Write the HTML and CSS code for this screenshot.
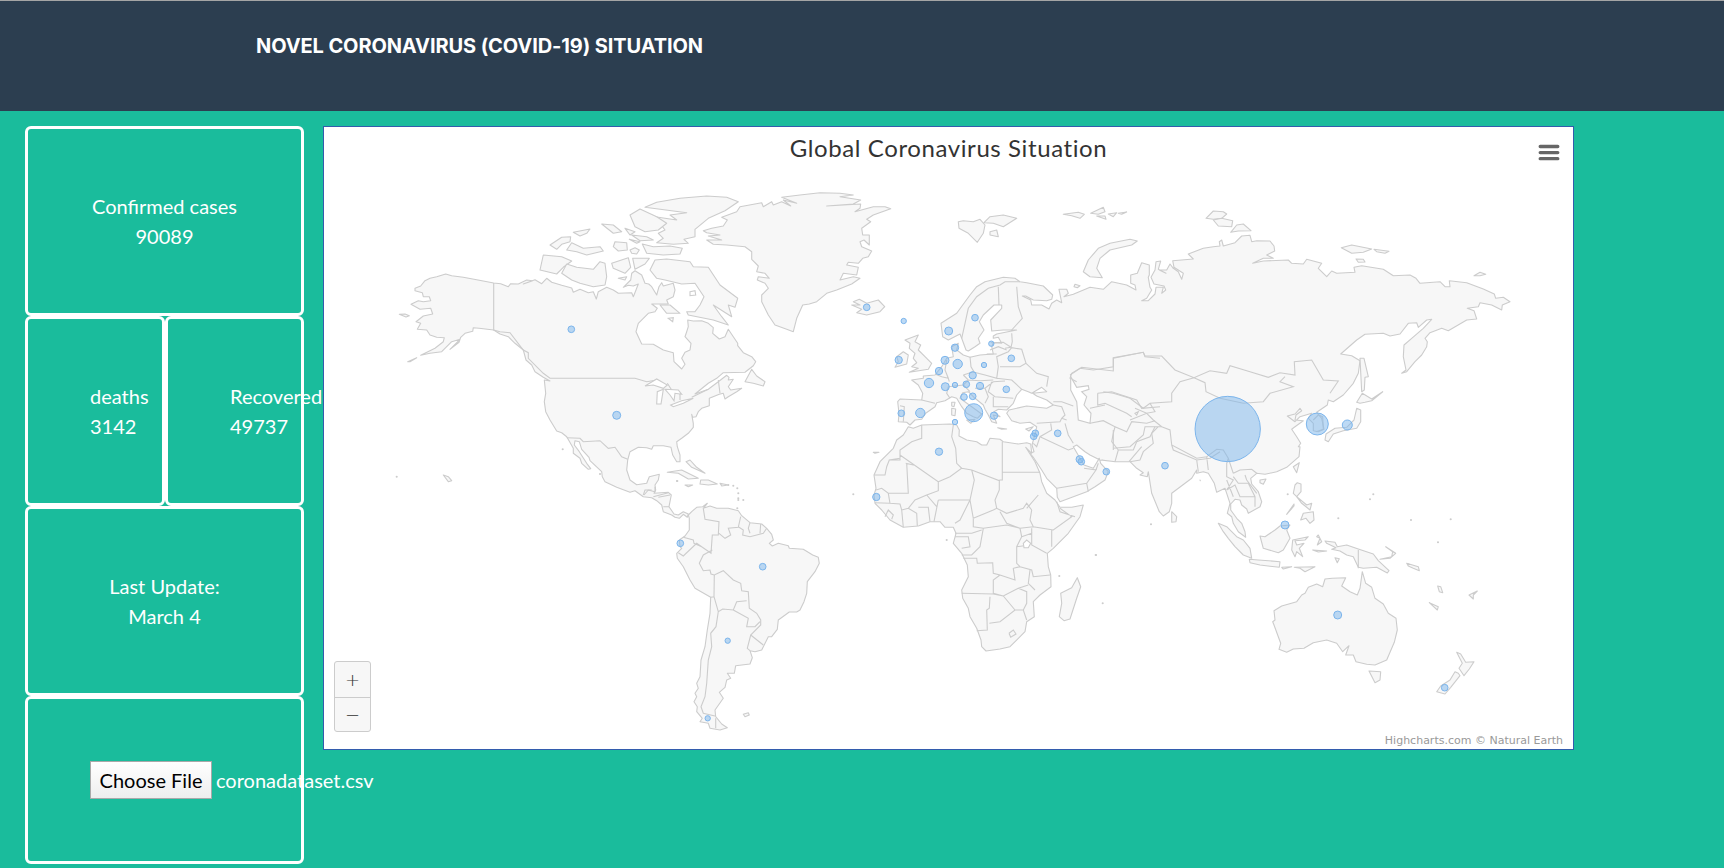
FILE: index.html
```html
<!DOCTYPE html>
<html lang="en">
<head>
<meta charset="utf-8">
<title>Novel Coronavirus (COVID-19) Situation</title>
<link rel="stylesheet" href="styles.css">
</head>
<body>
<header class="topbar"><h1 class="brand">NOVEL CORONAVIRUS (COVID-19) SITUATION</h1></header>
<main class="dashboard">
  <aside class="stats">
    <section class="card centered"><span>Confirmed cases</span><span>90089</span></section>
    <div class="pair">
      <section class="card"><span>deaths</span><span>3142</span></section>
      <section class="card"><span>Recovered</span><span>49737</span></section>
    </div>
    <section class="card centered"><span>Last Update:</span><span>March 4</span></section>
    <section class="card picker"><button class="choose">Choose File</button><span>coronadataset.csv</span></section>
  </aside>
  <section class="chart">
    <svg class="map" id="map" viewBox="324 127 1249 622"></svg>
    <h2 class="chart-title">Global Coronavirus Situation</h2>
    <svg class="menu" viewBox="0 0 22 17"><path d="M2.2 2.5H19.8M2.2 8.6H19.8M2.2 14.7H19.8"/></svg>
    <div class="zoomer"><button>+</button><button>−</button></div>
    <div class="credits">Highcharts.com © Natural Earth</div>
  </section>
</main>
<script src="map.js"></script>
</body>
</html>
```

FILE: styles.css
```css
* { box-sizing: border-box; }
body { margin: 0; height: 868px; overflow: hidden; background: #1abc9c; color: #fff; font: 20px/30px Lato, sans-serif; }
.topbar { height: 111px; background: #2c3e50; border-top: 1px solid #a5a5a5; padding: 30px 0 0 256px; }
.brand { margin: 0; font: 700 20px/30px Inter, sans-serif; letter-spacing: -0.1px; white-space: nowrap; }
.dashboard { display: flex; align-items: flex-start; gap: 19px; padding: 15px 0 0 25px; }
.stats { width: 279px; flex: none; }
.card { border: 3px solid #fff; border-radius: 6px; padding: 62px; height: 190px; display: flex; flex-direction: column; white-space: nowrap; }
.centered { align-items: center; }
.pair { display: grid; grid-template-columns: 140px 139px; height: 189.5px; }
.picker { flex-direction: row; align-items: center; gap: 4px; height: 168px; }
.choose { flex: none; width: 122px; height: 38px; padding: 0; border: 1px solid #a9a9a9; background: linear-gradient(#fff, #eee); font: 20px/30px Lato, sans-serif; color: #000; }
.chart { position: relative; z-index: 1; width: 1251px; height: 624px; background: #fff; border: 1px solid #335cad; }
.map { display: block; width: 1249px; height: 622px; }
.land { fill: #f7f7f7; stroke: #ccc; stroke-width: 1.1; stroke-linejoin: round; }
.water { fill: #fff; stroke: #ccc; stroke-width: 1.1; }
.border { fill: none; stroke: #ccc; stroke-width: 1.1; }
.bubble { fill: rgba(124, 181, 236, .5); stroke: #7cb5ec; stroke-width: 1; }
.chart-title { position: absolute; left: 0; right: 0; top: 5px; margin: 0; text-align: center; font: 400 24px/32px Lato, sans-serif; letter-spacing: .6px; color: #333; }
.menu { position: absolute; left: 1214px; top: 17px; width: 22px; height: 17px; fill: none; stroke: #666; stroke-width: 3.3; stroke-linecap: round; }
.zoomer { position: absolute; left: 10px; top: 534px; width: 37px; height: 71px; border: 1px solid #ccc; border-radius: 3px; background: #f7f7f7; display: grid; grid-template-rows: 35px 34px; }
.zoomer button { border: 0; padding: 0; background: none; color: #333; font: 18px/30px "DejaVu Sans", sans-serif; font-weight: 200; }
.zoomer button + button { border-top: 1px solid #ccc; }
.credits { position: absolute; right: 10px; bottom: 1px; font: 11px/14px "DejaVu Sans", sans-serif; color: #999; white-space: nowrap; }
```

FILE: map.js
```js
// Outlines are stored per map sheet in thirds of a pixel; "@x" switches sheet inside a path.
const sheets = { n: [380, 180], s: [520, 400], g: [640, 180], e: [860, 250], f: [860, 420], a: [1050, 190], i: [1080, 380], o: [1200, 480] };

const land = `
@n 105,325 122,318 135,302 150,295 170,290 197,282 215,287 250,292 298,301 341,309 362,311 385,320 392,311 415,312 440,300 458,302 430,312 465,299 485,311 500,295 515,307 545,316 575,324 580,337 600,328 625,338 640,335 649,357 655,335 680,322 700,330 715,340 755,338 760,350 768,330 775,312 760,318 745,316 730,322 752,300 755,280 765,272 785,285 795,310 806,312 815,320 830,345 837,320 845,308 850,318 880,310 885,330 880,350 860,360 865,372 840,372 815,372 832,385 825,395 805,400 790,415 775,430 768,455 775,470 785,492 820,493 850,510 880,518 882,545 905,567 915,553 905,535 915,517 930,510 933,490 915,470 920,455 925,440 923,420 940,423 965,422 985,430 1000,443 998,460 1018,477 1035,470 1045,448 1060,470 1073,490 1073,497 1090,518 1115,530 1127,545 1120,557 1095,577 1030,578 1010,595 985,610 945,642 985,628 1015,605 1040,586 1047,592 1045,600 1060,598 1045,620 1052,630 1085,625 1070,635 1045,650 1035,657 1030,640 1018,643 988,655 988,677 965,685 955,695 948,710 938,712 935,703 940,730 940,742 925,760 905,775 890,785 892,800 900,825 900,845 890,845 878,825 873,802 850,797 820,797 815,808 800,803 775,802 750,815 743,840 740,870 750,900 770,914 800,910 808,890 838,883 835,900 825,915 827,930 822,940 865,937 @s 454,285 447,320 462,342 475,345 490,335 505,342 502,352 490,343 478,355 465,352 455,345 430,335 425,315 410,302 395,293 370,290 345,272 330,277 290,262 255,245 247,230 245,215 210,182 207,172 185,148 178,125 165,122 163,135 178,155 200,190 212,206 205,208 185,190 180,175 160,160 160,145 142,113 @n 560,770 545,758 530,753 510,720 497,695 493,665 497,640 493,600 510,603 490,592 465,575 455,555 438,540 430,510 405,490 385,470 360,462 341,450 297,445 280,443 278,454 255,460 242,472 237,487 210,508 240,478 215,485 185,515 150,520 122,526 165,505 190,485 193,473 170,472 150,465 140,450 112,448 122,430 108,425 130,408 158,402 152,385 120,388 93,373 115,362 130,365 152,362 148,350 130,350 127,338 105,332
@s 505,345 515,335 530,322 548,320 562,310 550,325 570,318 590,325 625,325 655,332 665,347 690,368 725,372 740,385 755,403 760,420 748,430 757,438 775,430 805,437 808,445 850,448 878,465 895,472 898,490 885,515 862,545 860,580 852,605 840,630 830,636 808,636 775,660 772,688 755,710 745,710 725,750 705,755 690,752 697,773 690,792 647,797 643,820 622,820 632,835 620,840 615,862 598,877 610,895 585,930 587,950 605,972 622,983 600,990 570,985 565,970 540,965 547,955 530,935 532,920 522,905 530,890 525,880 535,865 530,850 540,830 543,780 555,740 562,690 570,640 572,592 525,565 510,540 490,500 472,475 470,460 485,445 480,440 478,420 495,408 508,390 508,355
@g 190,152 215,145 250,138 262,120 245,112 290,95 300,80 365,68 370,80 395,65 400,75 425,65 452,78 430,60 470,70 425,52 480,45 540,38 600,40 640,45 600,50 662,60 640,72 560,78 662,72 660,85 645,95 700,80 735,80 752,86 700,105 680,118 692,125 665,145 668,165 688,165 688,195 672,180 660,185 665,200 695,213 685,230 668,235 655,250 625,247 620,255 655,262 650,285 610,280 600,300 640,290 660,295 635,312 590,330 560,340 530,365 508,372 488,375 470,415 460,455 440,448 405,435 385,405 365,365 365,345 385,325 375,310 352,300 355,290 388,295 375,280 350,275 355,258 335,238 335,215 315,200 260,195 220,193 200,180 245,180 205,168 240,165 200,158
@e 480,95 500,98 550,108 578,135 575,148 560,152 520,150 497,138 487,138 512,150 515,165 545,165 567,177 575,160 590,150 605,158 597,118 620,118 625,130 612,140 640,133 690,112 730,118 755,95 800,105 828,120 825,105 812,100 812,75 832,70 845,38 868,45 868,75 @a 295,262 300,292 305,300 290,325 275,332 295,332 315,312 318,292 340,292 335,310 347,300 342,288 312,282 303,262 315,240 318,215 332,213 325,238 348,250 328,240 350,240 360,222 370,235 385,245 395,268 400,250 372,232 368,212 430,207 415,192 460,175 490,170 510,168 508,155 515,150 520,168 555,158 575,138 600,136 605,155 620,152 660,153 672,168 674,183 650,195 670,205 640,205 608,220 640,213 715,210 725,220 760,222 770,208 815,220 805,235 830,260 845,243 860,250 915,247 912,232 935,227 1000,238 1030,257 1080,255 1098,265 1110,280 1170,275 1185,290 1200,290 1198,272 1250,278 1300,297 1333,312 1337,325 1360,322 1380,335 1357,345 1355,360 1325,345 1290,338 1285,350 1252,355 1272,362 1280,387 1250,390 1195,422 1175,415 1140,428 1125,445 1132,455 1130,470 1115,495 1095,515 1070,545 1055,550 1068,540 1060,500 1062,465 1085,445 1120,415 1145,388 1130,390 1105,412 1100,398 1075,400 1050,432 1020,438 1000,430 945,433 920,450 872,492 905,497 930,512 925,550 910,580 880,615 850,635 835,630 832,645 800,667 815,685 822,718 805,725 790,722 790,700 775,685 785,670 750,680 735,695 712,678 735,672 750,655 755,662 738,675 735,690 760,692 733,712 725,718 740,740 752,760 745,770 @i 660,200 657,230 640,245 620,262 590,275 555,283 530,280 512,295 515,312 535,335 545,365 540,380 505,400 500,387 485,375 480,360 465,358 452,372 452,390 470,415 485,430 495,455 497,472 475,455 460,430 455,410 442,400 450,370 440,340 435,325 410,337 403,310 385,280 370,275 350,280 350,270 335,295 275,340 275,370 268,395 250,408 238,395 215,340 205,275 202,290 180,285 190,278 170,265 150,245 105,245 65,240 @e 767,635 720,630 690,615 675,605 650,585 640,590 660,625 672,645 700,655 718,625 722,640 745,665 735,690 705,710 @f 680,215 600,245 592,232 590,205 560,175 545,150 520,112 510,100 522,95 516,75 527,35 530,20 @e 510,517 480,520 455,512 440,490 447,480 500,468 560,475 580,465 560,450 530,438 518,430 560,425 545,412 515,430 505,425 485,418 470,435 460,460 440,480 415,478 402,485 420,500 400,495 410,520 395,515 385,495 375,478 370,465 345,445 325,425 308,428 300,445 335,470 365,492 352,505 340,500 320,490 305,470 290,445 275,440 255,452 230,458 225,470 197,490 185,508 165,510 150,525 140,517 115,515 117,490 113,455 120,447 185,450 188,430 175,405 155,390 190,385 190,378 225,375 245,350 260,325 280,320 275,290 295,280 290,300 310,315 330,322 360,315 400,312 395,290 400,278 425,280 415,262 400,265 400,258 410,252 470,240 430,240 395,243 392,210 425,175 425,165 402,165 370,195 358,215 372,240 355,265 360,280 345,290 325,303 318,300 305,265 300,252 265,270 248,260 243,220 290,190 330,135 350,110 375,95 430,82 465,85
@f 145,20 160,25 185,15 270,12 290,15 298,30 297,48 320,60 350,65 365,75 380,75 390,55 420,58 430,65 475,72 500,68 512,72 515,100 497,82 525,125 540,160 545,185 560,220 585,240 600,262 635,262 670,255 660,290 625,340 580,385 562,400 565,440 572,465 573,500 540,525 520,545 523,590 500,605 495,635 450,680 420,687 378,693 365,680 363,660 350,625 330,590 325,565 308,535 305,510 325,470 322,435 305,400 280,370 288,340 280,322 255,322 240,305 210,305 175,318 130,322 90,300 65,270 45,250 42,225 48,205 42,165 60,125 100,85 110,60 130,45
@f 652,473 662,500 650,535 630,597 612,602 598,590 605,550 602,520 635,503
@o 487,275 497,310 515,322 525,355 550,372 565,400 588,415 592,450 583,487 560,540 525,555 500,553 468,545 460,525 437,525 447,497 428,515 410,490 380,480 340,488 312,505 280,507 260,517 237,508 242,490 222,435 218,425 225,420 222,392 245,378 290,365 305,345 315,340 325,322 350,312 368,320 375,297 397,295 437,293 425,318 450,335 472,345 480,325
@o 507,573 542,575 540,600 525,608
@o 770,517 782,522 797,547 822,545 808,567 792,587 777,565 787,550
@o 765,575 775,580 780,587 752,622 735,642 710,635 722,618 750,600
@o 55,130 80,140 110,170 130,180 150,205 155,235 130,225 105,200 85,175 70,155
@o 148,238 175,240 240,245 238,262 180,255 150,248
@o 180,168 195,170 225,150 240,138 270,135 260,150 270,175 250,210 235,218 190,205
@o 278,180 325,170 315,180 285,182 290,195 312,190 298,205 308,230 290,215 285,230 275,210
@o 375,183 405,187 412,200 440,195 475,207 520,222 535,242 567,272 562,279 530,262 490,265 475,262 460,230 440,225 420,213 395,208 408,203 380,190
@o 540,238 570,235 587,220 557,200 578,215 575,230
@o 292,8 303,12 303,35 290,50 280,40 285,15
@o 260,103 282,72 282,78
@o 290,50 320,75 335,70 330,90 305,70
@o 302,120 310,100 340,95 342,120 330,130 318,115
@o 245,262 275,260 250,267
@o 283,262 345,260 315,275 300,265
@o 338,210 380,213 355,216
@o 350,170 360,175 352,195 365,185 355,165
@o 620,250 655,260 658,272 640,265 625,258
@o 713,318 722,320 728,338 718,335
@o 688,368 715,380 712,390
@o 807,345 832,333 820,345 820,357
@o 405,233 418,236 412,248
@i 275,395 290,410 288,425 275,427
@i 540,300 558,297 550,313 540,308
@i 640,260 658,248 650,278
@a 930,505 942,505 955,560 945,562 943,600 935,605
@a 937,610 965,627 998,605 965,632 945,637 930,640 920,637
@a 920,655 932,660 932,695 920,715 880,722 850,732 835,755 825,750 828,732 855,715 890,712 912,690
@a 100,245 115,210 145,175 180,160 240,148 262,153 245,165 180,180 150,205 140,235 157,263 120,260
@a 468,85 490,63 520,65 530,72 515,85 490,88
@a 490,90 515,85 548,92 545,110 505,108
@a 542,127 560,105 580,102 603,122 565,123
@a 874,173 905,165 965,177 940,187 905,190
@a 972,178 1017,184 1005,190 980,185
@a 918,207 940,208 945,216 925,217
@a 1272,257 1290,247 1307,253 1290,257
@a 40,73 85,67 103,73 90,85 65,77
@a 122,70 160,52 165,65 145,73
@a 175,72 200,68 190,80
@a 140,78 165,78 168,88
@a 205,70 230,66 215,73
@a 75,283 90,287 82,293 72,290
@g 955,125 970,122 1000,125 1020,118 1035,135 1030,160 1012,187 985,160 957,145
@g 1032,128 1050,110 1090,105 1130,115 1090,140 1060,130
@g 1050,155 1070,150 1075,170 1050,165
@g 635,375 660,375 640,365 658,358 680,370 715,360 734,380 720,395 680,405 650,398 665,388
@g 795,480 835,465 825,485 842,495 835,510 855,530 875,550 865,568 808,577 835,565 815,560 830,548 820,535 825,520 808,505 810,490
@g 770,530 790,515 805,525 800,552 765,562 775,545
@n 795,82 830,67 900,55 980,48 1040,52 1075,65 1035,92 985,115 945,148 945,170 912,178 925,190 880,193 830,188 850,175 835,160 855,150 825,110 890,120 870,105 920,98
@n 750,105 780,87 830,110 860,130 835,150 795,155 765,140
@n 787,192 820,200 870,198 907,205 900,222 850,225 800,220
@n 665,132 700,135 725,155 700,160
@n 735,145 765,155 750,165
@n 755,165 800,170 820,180 780,182
@n 705,185 740,188 742,210 715,213 700,200
@n 750,210 765,203 778,210 770,222 755,220
@n 748,178 780,185 770,190
@n 510,195 545,172 572,170 570,185 545,193 530,208
@n 580,157 630,147 620,160 600,168
@n 560,210 575,188 610,205 660,200 670,213 620,225 590,215
@n 490,225 545,230 575,243 550,262 530,282 480,270
@n 545,280 560,252 590,262 640,268 660,245 675,250 680,290 675,315 640,320 600,310 575,300
@n 695,250 745,233 752,262 735,280 700,265
@n 758,235 808,235 795,252 765,268
@n 740,290 715,295 735,300
@n 810,270 825,240 860,237 930,245 940,260 985,262 1020,315 1073,355 1065,382 1045,375 1055,410 1000,375 1025,410 1045,435 1000,420 925,405 920,395 945,395 960,375 972,350 945,310 905,312 855,300 830,295
@n 840,375 870,375 900,400 860,400
@n 1095,605 1115,568 1130,588 1155,605 1150,618 1120,610
@n 862,877 905,870 955,895 925,897 895,880
@n 962,900 985,900 1012,912 985,915 960,912
@n 915,915 938,915 925,920
@n 918,845 930,840 948,860 975,880 935,862
@n 58,403 75,402 88,407 78,411
@n 83,545 110,533 90,545
@n 190,885 205,890 215,902 205,905
@s 670,943 685,938 688,945 675,950
@e 275,457 285,457 282,470 275,468
@e 275,475 287,477 285,497 275,495
@e 320,510 345,508 332,520
@e 497,537 520,530 507,543
@e 413,533 440,537 425,538
@e 40,607 57,607 45,610
@s 600,250 625,255 605,258
@o 0,0 1,2`;

const water = `
@e 632,380 632,420 650,455 655,510 690,520 693,490 672,465 680,440 665,425 687,418 685,407 650,412
@f 490,370 500,360 512,370 505,383 492,383
@n 795,618 830,597 862,615 850,625 820,615
@n 830,672 832,635 850,628 848,640 843,672
@n 855,628 895,630 905,643 885,640 882,662 870,645
@n 872,675 905,662 940,655 910,670 880,680
@n 865,415 880,413 878,425
@n 930,335 945,332 947,345 930,347
@a 255,670 265,665 260,675`;

const borders = `
@n 341,309 341,450 360,455 390,458 430,510 445,518 445,535 490,580 510,595 765,595 800,605 830,600 M 862,610 875,630 900,640 900,660 M 935,652 985,628
@n 560,773 600,775 610,785 660,782 685,805 705,802 725,830 743,838 M 1015,600 1020,640
@n 790,945 795,930 815,930 M 820,950 865,938
@s 372,285 385,270 405,275 405,260 M 415,292 450,285 M 430,320 447,320
@s 550,325 555,358 597,365 595,405 577,405 573,460 545,440 522,430 520,420 490,412 M 597,400 615,415 632,405 625,385 655,382 662,350 M 655,380 670,390 668,405 690,410 730,400 740,385 M 690,368 685,385 690,400 M 722,372 720,400 M 545,440 530,430 490,468 475,458 M 577,450 550,465 538,490 550,512 570,510 573,522 583,525 610,512 640,540 662,550 665,572 685,575 688,625 710,640 722,660 722,675 692,705 682,745 690,752
@s 583,525 582,590 572,592 M 582,590 595,635 608,627 640,630 650,605 680,602 M 640,630 685,655 680,680 705,680 720,665 M 692,705 730,735 M 595,635 588,680 572,700 575,740 565,780 560,850 555,890 543,920 550,940 585,948 M 587,955 587,985
@e 305,265 315,220 325,175 350,140 385,115 420,105 435,95 480,95 M 415,110 417,165 M 470,110 475,170 487,205 455,240 M 455,250 457,275 453,292 435,295 M 392,278 430,277 453,292 M 390,300 415,290 440,300 M 380,312 410,312
@e 330,320 333,350 343,367 375,375 410,385 415,350 410,320 445,305 455,293 485,298 498,340 480,350 420,350 M 498,340 530,370 565,380 560,410 M 410,385 455,390 485,418 M 400,395 435,393 M 260,330 255,360 265,385 268,395 M 265,385 245,380 225,372 M 310,375 340,365 M 310,375 325,390 360,392 400,390 M 325,390 310,405 265,410 M 345,415 375,415 400,395 M 395,395 385,425 405,440 460,445 M 375,415 385,440 375,460 M 265,410 260,430 270,445 M 310,405 330,425 M 400,440 400,470 445,470 M 120,467 133,470 130,515 M 185,450 225,460
@e 580,465 605,470 615,495 605,505 600,515 530,520 M 580,455 605,455 640,468 M 605,505 620,510 M 615,520 625,555 640,580 M 572,520 575,540 540,560 530,590 520,580 M 540,560 625,600 640,595
@e 650,395 630,385 635,370 660,355 700,360 760,350 760,325 850,307 855,320 900,325
@e 690,520 730,512 765,530 760,550 755,575 775,600 765,635 M 713,430 713,465 735,460 800,490 815,500 M 713,430 755,425 830,450 845,475 900,470 M 690,475 735,465 M 765,530 800,545 815,515 860,520 885,512 M 775,600 820,600 830,575 870,560 885,530 M 807,635 845,590
@a 60,555 95,532 190,543 190,503 280,487 285,498 335,498 375,540 432,563 480,542 530,550 540,527 600,545 655,562 690,548 735,555 733,515 785,510 820,570 865,573 840,610 M 432,563 465,578 468,605 510,625 580,640 640,635 660,610 730,590 690,575 705,560 M 432,563 390,575 365,610 365,635 300,640 280,655 240,625 190,610 160,605 M 300,640 315,665 290,670 255,655 M 240,690 290,670 310,690 335,710 M 190,720 190,780
@i 235,140 215,160 220,190 190,215 180,240 150,245 M 100,205 150,200 190,165 195,140 245,140 270,150 275,195 350,235 380,230 410,208 430,210 445,235 460,280 M 275,195 280,210 350,240 390,235 420,215 M 350,240 355,275 M 380,230 385,270 M 445,235 440,250 440,290 460,300 440,330 M 460,280 480,270 515,268 530,280 M 440,300 460,350 M 460,290 475,310 505,310 525,350 525,380 M 440,330 465,315 480,350 525,350 M 835,510 835,565 M 495,285 500,300 530,340
@i 700,120 715,105 728,110 730,148 708,155
@f 120,105 235,185 235,212 200,225 165,240 145,265 M 185,15 185,55 155,65 120,90 120,115 88,120 80,140 75,165 42,165 M 120,115 120,120 92,120 M 140,130 145,220 85,220 65,205 48,210 M 137,130 160,135 M 235,185 270,170 305,145 290,130 287,85 275,50 280,15 M 305,145 335,150 418,182 418,210 405,240 410,265 M 427,65 427,180 418,180 M 428,157 540,157 M 335,150 343,180 330,240 340,295 400,270 410,265 440,280 490,265 500,250 515,270 M 235,240 330,240 300,300 285,310 M 235,240 222,305 M 85,220 90,250 120,252 125,270 130,322 M 45,248 90,250 M 125,270 145,265 170,280 172,318 M 175,262 205,262 210,305 M 200,225 230,260 M 515,270 510,300 520,320 580,330 635,290 600,265 M 535,225 500,265 M 590,245 600,275 645,290 M 420,275 440,310 480,325 520,320 M 575,330 575,380 M 340,295 340,320 370,325 440,315 480,325 485,350 470,380 470,430 480,440 M 480,440 460,445 465,480 420,465 400,460 398,428 352,430 350,415 310,415 M 285,340 335,340 365,330 M 370,325 360,380 335,405 305,405 M 285,350 325,350 330,380 305,385 M 485,350 515,340 515,375 560,400 M 515,325 515,340 M 470,380 510,375 M 480,440 515,450 520,470 570,465 M 510,450 505,490 525,510 M 420,465 400,480 400,520 430,528 475,505 505,495 M 305,520 400,522 430,528 M 390,530 388,565 380,570 382,630 350,632 M 388,610 420,605 465,570 490,570 500,600 M 430,528 465,570 M 475,505 500,515 500,550 490,570 M 447,640 460,630 468,642 452,652 447,640 M 75,290 85,270 100,285 95,298 M 590,205 680,190 708,150 672,145 M 680,190 685,215 M 708,150 715,130`;

// x, y, radius in sheet units
const bubbles = `@n 574,448,10 710,706,12 @s 481,430,10 728,500,10 623,722,8 563,955,8
@e 20,172,10 131,213,8 345,203,10 266,243,12 285,293,11 394,281,8 116,330,11 255,331,12 293,342,14 372,345,8 454,325,10 237,363,11 338,376,11 207,399,14 256,410,12 285,405,8 319,403,10 360,408,11 439,418,10 312,441,10 338,439,10 341,488,27 124,490,10 181,489,14 402,497,11 285,516,8 526,550,10 521,559,10 593,550,10 659,628,11 664,635,10 739,665,10 237,605,11
@f 49,231,11 @a 533,717,98 802,702,33 892,705,15 @i 255,257,10 615,435,12 @o 413,405,12 734,623,10`;

const islets = `@n 548,808 660,882 1045,915 1060,917 1072,925 1075,940 1075,955 892,903 @s 655,300 652,325 670,300 471,243 1000,283 @f 260,360 708,405 598,468 728,550 @i 213,433 47,525 775,415 870,358 880,343 623,343 985,553 @o 633,120 752,118 714,187 @n 50,890`;

const svg = document.getElementById('map');
let origin = sheets.n;
const place = (x, y) => [(origin[0] + x / 3).toFixed(1), (origin[1] + y / 3).toFixed(1)];
function add(tag, cls, attrs) {
  const el = document.createElementNS('http://www.w3.org/2000/svg', tag);
  el.setAttribute('class', cls);
  for (const k in attrs) el.setAttribute(k, attrs[k]);
  svg.append(el);
}
function trace(line, cls, close) {
  let d = '', cmd = 'M';
  for (const t of line.trim().split(/\s+/)) {
    if (t[0] === '@') origin = sheets[t[1]];
    else if (t === 'M') cmd = 'M';
    else { d += cmd + place(...t.split(',').map(Number)); cmd = 'L'; }
  }
  add('path', cls, { d: d + (close ? 'Z' : '') });
}
land.trim().split('\n').forEach(l => trace(l, 'land', true));
borders.trim().split('\n').forEach(l => trace(l, 'border', false));
water.trim().split('\n').forEach(l => trace(l, 'water', true));
function dots(src, cls) {
  for (const t of src.trim().split(/\s+/)) {
    if (t[0] === '@') { origin = sheets[t[1]]; continue; }
    const [x, y, r] = t.split(',').map(Number);
    const [cx, cy] = place(x, y);
    add('circle', cls, { cx, cy, r: (r || 1.5) / 3 });
  }
}
dots(islets, 'land');
dots(bubbles, 'bubble');
```
